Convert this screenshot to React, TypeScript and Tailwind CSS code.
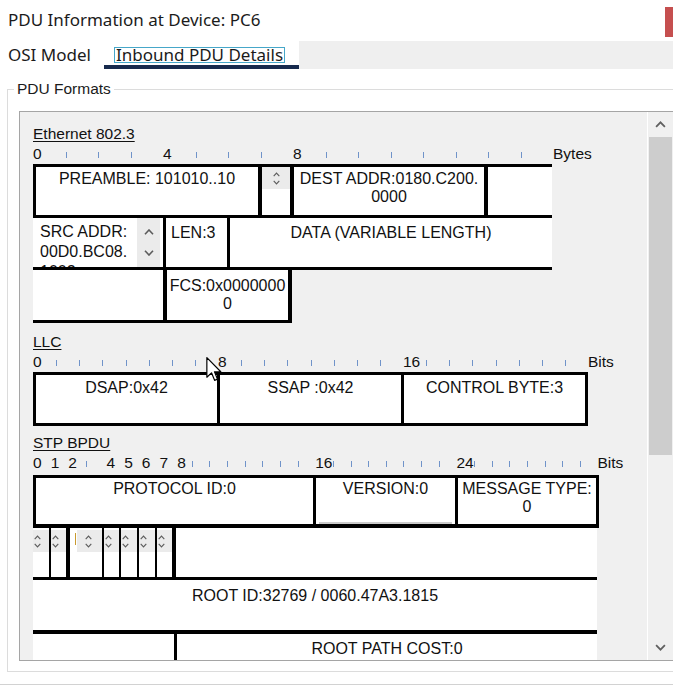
import type { ReactNode } from "react";

function Chevron({ up, className }: { up?: boolean; className?: string }) {
  return (
    <svg viewBox="0 0 10 6" className={className} fill="none" stroke="currentColor" strokeWidth={1.6}>
      <path d={up ? "M1 5.2 L5 1 L9 5.2" : "M1 0.8 L5 5 L9 0.8"} />
    </svg>
  );
}

/** small up/down spinner as drawn inside the tiny text boxes */
function Spin({ className = "" }: { className?: string }) {
  return (
    <div className={`flex h-[22px] flex-col justify-center gap-[3px] bg-[#ebebeb] ${className}`}>
      <Chevron up className="h-[5px] w-[7px] text-[#5c5c5c]" />
      <Chevron className="h-[5px] w-[7px] text-[#5c5c5c]" />
    </div>
  );
}

interface RulerProps {
  units: number;
  unitClass: string;
  labels: Record<number, string>;
  shifted?: number[];
  end: string;
}

function Ruler({ units, unitClass, labels, shifted = [], end }: RulerProps) {
  return (
    <div className="flex h-[20px] leading-[20px]">
      {Array.from({ length: units }, (_, i) => (
        <div key={i} className={`${unitClass} shrink-0 whitespace-nowrap`}>
          {labels[i] !== undefined ? (
            <span className={shifted.includes(i) ? "pl-[3px]" : ""}>{labels[i]}</span>
          ) : (
            <div className="mt-[8px] h-[6px] w-px bg-[#7093c9]" />
          )}
        </div>
      ))}
      <span className="whitespace-nowrap">{end}</span>
    </div>
  );
}

function Label({ children, className = "" }: { children: ReactNode; className?: string }) {
  return <div className={`leading-[20px] underline underline-offset-[2px] ${className}`}>{children}</div>;
}

export default function App() {
  return (
    <div className="relative h-[685px] w-[673px] overflow-hidden bg-white font-['Noto_Sans',sans-serif] text-[#1b1b1b]">
      {/* window title */}
      <div className="flex h-[41px] justify-between">
        <div className="pl-[8px] pt-[8px] text-[17px] leading-[24px]">PDU Information at Device: PC6</div>
        <div className="mt-[7px] h-[30px] w-[8px] bg-[#c54f4f]" />
      </div>

      {/* tabs */}
      <div className="flex h-[28px] text-[17px]">
        <div className="flex w-[104px] items-center pl-[8px]">OSI Model</div>
        <div className="flex w-[195px] items-start border-b-4 border-[#172a4d] pt-[6px] pl-[10px]">
          <div className="flex h-[16px] items-center border border-[#46a7c9] px-[1px] leading-[16px]">
            Inbound PDU Details
          </div>
        </div>
        <div className="flex-1 bg-[#efefef]" />
      </div>

      <fieldset className="mt-[11px] ml-[7px] w-[690px] border border-[#dcdcdc] pb-[10px]">
        <legend className="ml-[6px] px-[3px] font-['Liberation_Sans',Arial,sans-serif] text-[15.5px] leading-[18px]">
          PDU Formats
        </legend>

        <div className="mt-[13px] ml-[11px] flex h-[550px] w-[655px] border border-[#a5a5a5] bg-[#f0f0f0]">
          <div className="relative min-w-0 flex-1 overflow-hidden pt-[12px] pl-[13px] font-['Liberation_Sans',Arial,sans-serif] text-[15.5px] text-[#111]">
            {/* Ethernet 802.3 */}
            <Label>Ethernet 802.3</Label>
            <Ruler units={16} unitClass="w-[32.5px]" labels={{ 0: "0", 4: "4", 8: "8" }} end="Bytes" />
            <div className="flex h-[54px] text-[16px] leading-[18px]">
              <div className="w-[229px] border-y-[3px] border-r-[4px] border-l-[3px] border-black bg-white pt-[3px] text-center">
                PREAMBLE: 101010..10
              </div>
              <div className="w-[28px] border-y-[3px] border-black bg-white">
                <Spin className="items-center" />
              </div>
              <div className="w-[198px] border-x-[4px] border-y-[3px] border-black bg-white pt-[3px] text-center">
                DEST ADDR:0180.C200.
                <br />
                0000
              </div>
              <div className="w-[64px] border-y-[3px] border-black bg-white" />
            </div>
            <div className="flex h-[52px] text-[16px] leading-[18px]">
              <div className="flex w-[130px] border-b-[3px] border-black bg-white">
                <div className="w-[104px] overflow-hidden pt-[4px] pl-[7px] leading-[20px]">
                  SRC ADDR:
                  <br />
                  00D0.BC08.
                  <br />
                  1002
                </div>
                <div className="flex w-[23px] flex-col items-center justify-around bg-[#ebebeb] py-[4px]">
                  <Chevron up className="h-[6px] w-[10px] text-[#5c5c5c]" />
                  <Chevron className="h-[6px] w-[10px] text-[#5c5c5c]" />
                </div>
              </div>
              <div className="w-[67px] border-x-[3px] border-b-[3px] border-black bg-white pt-[6px] pl-[5px]">LEN:3</div>
              <div className="w-[322px] border-b-[3px] border-black bg-white pt-[6px] text-center">
                DATA (VARIABLE LENGTH)
              </div>
            </div>
            <div className="flex h-[53px] text-[16px] leading-[18px]">
              <div className="w-[130px] border-b-[3px] border-black bg-white" />
              <div className="w-[129px] border-x-[4px] border-b-[3px] border-black bg-white pt-[7px] text-center">
                FCS:0x0000000
                <br />0
              </div>
            </div>

            {/* LLC */}
            <Label className="mt-[9px]">LLC</Label>
            <Ruler
              units={24}
              unitClass="w-[23.125px]"
              labels={{ 0: "0", 8: "8", 16: "16" }}
              end="Bits"
            />
            <div className="flex h-[54px] text-[16px] leading-[18px]">
              <div className="w-[187px] border-[3px] border-black bg-white pt-[4px] text-center">DSAP:0x42</div>
              <div className="w-[184px] border-y-[3px] border-r-[3px] border-black bg-white pt-[4px] text-center">
                SSAP :0x42
              </div>
              <div className="w-[184px] border-y-[3px] border-r-[3px] border-black bg-white pt-[4px] text-center">
                CONTROL BYTE:3
              </div>
            </div>

            {/* STP BPDU */}
            <Label className="mt-[7px]">STP BPDU</Label>
            <Ruler
              units={32}
              unitClass="w-[17.65px]"
              labels={{ 0: "0", 1: "1", 2: "2", 4: "4", 5: "5", 6: "6", 7: "7", 8: "8", 16: "16", 24: "24" }}
              shifted={[4, 5, 6, 7, 8]}
              end="Bits"
            />
            <div className="mt-[2px] flex h-[53px] text-[16px] leading-[18px]">
              <div className="w-[283px] border-x-[3px] border-t-[3px] border-b-[4px] border-black bg-white pt-[2px] text-center">
                PROTOCOL ID:0
              </div>
              <div className="flex w-[142px] flex-col border-t-[3px] border-r-[3px] border-b-[4px] border-black bg-white pt-[2px] text-center">
                VERSION:0
                <div className="mx-[3px] mt-auto h-[2px] bg-[#cbcbcb]" />
              </div>
              <div className="w-[141px] border-t-[3px] border-r-[3px] border-b-[4px] border-black bg-white pt-[2px] text-center">
                MESSAGE TYPE:
                <br />0
              </div>
            </div>
            <div className="flex h-[52px]">
              <div className="w-[18px] border-r-[2px] border-b-[3px] border-black bg-white pt-[2px]">
                <Spin className="pl-[1px]" />
              </div>
              <div className="w-[19px] border-r-[4px] border-b-[3px] border-black bg-white pt-[2px]">
                <Spin className="pl-[1px]" />
              </div>
              <div className="flex w-[34px] border-r-[2px] border-b-[3px] border-black bg-white pt-[2px]">
                <div className="w-[7px] pt-[3px] pl-[5px]">
                  <div className="h-[12px] w-px bg-[#c99a2e]" />
                </div>
                <Spin className="flex-1 pl-[8px]" />
              </div>
              <div className="w-[17px] border-r-[2px] border-b-[3px] border-black bg-white pt-[2px]">
                <Spin className="pl-[1px]" />
              </div>
              <div className="w-[18px] border-r-[2px] border-b-[3px] border-black bg-white pt-[2px]">
                <Spin className="pl-[1px]" />
              </div>
              <div className="w-[18px] border-r-[2px] border-b-[3px] border-black bg-white pt-[2px]">
                <Spin className="pl-[1px]" />
              </div>
              <div className="w-[19px] border-r-[4px] border-b-[3px] border-black bg-white pt-[2px]">
                <Spin className="pl-[1px]" />
              </div>
              <div className="w-[421px] border-b-[3px] border-black bg-white" />
            </div>
            <div className="flex h-[54px] text-[16px] leading-[18px]">
              <div className="w-[564px] border-b-[4px] border-black bg-white pt-[7px] text-center">
                ROOT ID:32769 / 0060.47A3.1815
              </div>
            </div>
            <div className="flex h-[48px] text-[16px] leading-[18px]">
              <div className="w-[141px] bg-white" />
              <div className="w-[423px] border-l-[3px] border-black bg-white pt-[6px] text-center">ROOT PATH COST:0</div>
            </div>

            {/* mouse pointer over the LLC ruler */}
            <svg viewBox="0 0 13 21" className="absolute top-[245px] left-[186px] h-[25px] w-[16px]">
              <path
                d="M0.5 0.5 L0.5 17 L4.4 13.3 L7 19.6 L9.4 18.6 L6.9 12.4 L12.2 12.4 Z"
                fill="white"
                stroke="black"
                strokeWidth={1}
                strokeLinejoin="round"
              />
            </svg>
          </div>

          {/* vertical scrollbar */}
          <div className="flex w-[26px] shrink-0 flex-col border-l border-white bg-[#f0f0f0]">
            <div className="flex h-[25px] items-center justify-center">
              <Chevron up className="h-[7px] w-[11px] text-[#606060]" />
            </div>
            <div className="mx-[1px] h-[318px] bg-[#cdcdcd]" />
            <div className="flex-1" />
            <div className="flex h-[26px] items-center justify-center">
              <Chevron className="h-[7px] w-[11px] text-[#606060]" />
            </div>
          </div>
        </div>
      </fieldset>

      <div className="mt-[12px] h-px bg-[#d2d2d2]" />
    </div>
  );
}
